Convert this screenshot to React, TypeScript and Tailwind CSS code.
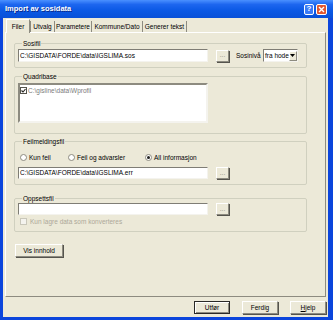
import React from "react";

const sunken =
  "bg-white border border-t-[#7f7d75] border-l-[#7f7d75] border-r-[#f4f3ee] border-b-[#f4f3ee]";
const raised =
  "bg-[#ECE9D8] border border-t-white border-l-white border-r-[#8d8b80] border-b-[#8d8b80] shadow-[1px_1px_0_#55544d]";

function DotsButton() {
  return (
    <div className={`ml-[8px] w-[13px] h-[12px] ${raised} flex items-center justify-center text-[#8d8b80] leading-none`}>
      ...
    </div>
  );
}

function Radio({ label, checked }: { label: string; checked?: boolean }) {
  return (
    <div className="flex items-center gap-[2px]">
      <div className="w-[7px] h-[7px] rounded-full bg-white border border-[#8d8b80] flex items-center justify-center">
        {checked && <div className="w-[3px] h-[3px] rounded-full bg-[#21211f]" />}
      </div>
      <span>{label}</span>
    </div>
  );
}

export default function App() {
  return (
    <div className="w-[333px] h-[320px] bg-[#0b45dc] flex flex-col font-['Liberation_Sans',Arial,sans-serif] text-[6.5px] text-black overflow-hidden">
      {/* Title bar */}
      <div className="h-[18px] flex items-center pl-[5px] pr-[6px] bg-[linear-gradient(to_bottom,#4a90ff_0%,#1d66ef_25%,#0a58e4_60%,#0850d8_100%)]">
        <span className="flex-1 text-white font-bold text-[7.5px] [text-shadow:1px_1px_0_#0a2a8a]">
          Import av sosidata
        </span>
        <div className="w-[10px] h-[11px] rounded-[2px] border border-white bg-[#3b7bf7] text-white text-[8px] font-bold flex items-center justify-center leading-none">
          ?
        </div>
        <div className="ml-[2px] w-[11px] h-[11px] rounded-[2px] border border-white bg-[#e1562f] flex items-center justify-center">
          <svg width="7" height="7" viewBox="0 0 7 7">
            <path d="M1 1 L6 6 M6 1 L1 6" stroke="white" strokeWidth="1.4" />
          </svg>
        </div>
      </div>

      {/* Dialog body */}
      <div className="flex-1 ml-[3px] mr-[5px] mb-[3px] bg-[#ECE9D8] flex flex-col">
        {/* Tabs */}
        <div className="h-[14px] flex items-end pl-[3px]">
          <div className="relative z-10 -mb-px w-[24px] h-[14px] bg-[#ECE9D8] border border-b-0 border-t-white border-l-white border-r-[#8d8b80] flex items-center justify-center">
            Filer
          </div>
          <div className="w-[25px] h-[11px] border-l border-r border-[#8d8b80] flex items-center justify-center">Utvalg</div>
          <div className="w-[37px] h-[11px] border-r border-[#8d8b80] flex items-center justify-center">Parametere</div>
          <div className="w-[51px] h-[11px] border-r border-[#8d8b80] flex items-center justify-center">Kommune/Dato</div>
          <div className="w-[44px] h-[11px] border-r border-[#8d8b80] flex items-center justify-center">Generer tekst</div>
        </div>

        {/* Tab panel */}
        <div className="ml-[2px] mr-[2px] h-[265px] border border-t-white border-l-white border-r-[#8d8b80] border-b-[#8d8b80] flex flex-col">
          {/* Sosifil */}
          <fieldset className="ml-[8px] mt-[6px] w-[293px] h-[29px] border border-[#d0d0bf] rounded-[2px] pl-[3px]">
            <legend className="ml-[4px] px-[1px] leading-[9px]">Sosifil</legend>
            <div className="pt-[1px] flex items-center">
              <div className={`w-[190px] h-[13px] ${sunken} flex items-center pl-[1px]`}>
                C:\GISDATA\FORDE\data\IGSLIMA.sos
              </div>
              <DotsButton />
              <span className="ml-[7px] w-[27px] whitespace-nowrap">Sosinivå</span>
              <div className={`w-[35px] h-[13px] ${sunken} flex items-center overflow-hidden`}>
                <span className="flex-1 pl-[1px] whitespace-nowrap">fra hode</span>
                <div className={`w-[8px] h-[10px] mr-px shrink-0 ${raised} shadow-none flex items-center justify-center`}>
                  <svg width="5" height="3" viewBox="0 0 5 3">
                    <path d="M0 0 H5 L2.5 3 Z" fill="#000" />
                  </svg>
                </div>
              </div>
            </div>
          </fieldset>

          {/* Quadribase */}
          <fieldset className="ml-[8px] mt-[4px] w-[293px] h-[62px] border border-[#d0d0bf] rounded-[2px] pl-[3px]">
            <legend className="ml-[4px] px-[1px] leading-[9px]">Quadribase</legend>
            <div className="mt-[2px] w-[190px] h-[40px] bg-white border-2 border-t-[#8d8b80] border-l-[#8d8b80] border-r-[#f4f3ee] border-b-[#f4f3ee] pt-[1px]">
              <div className="flex items-center">
                <div className="w-[7px] h-[7px] border border-[#55544d] bg-white flex items-center justify-center">
                  <svg width="5" height="5" viewBox="0 0 5 5">
                    <path d="M0.5 2.5 L2 4 L4.5 1" stroke="#21211f" strokeWidth="1.1" fill="none" />
                  </svg>
                </div>
                <span className="ml-[1px] text-[#7b7b7b]">C:\gisline\data\Wprofil</span>
              </div>
            </div>
          </fieldset>

          {/* Feilmeldingsfil */}
          <fieldset className="ml-[8px] mt-[3px] w-[293px] h-[48px] border border-[#d0d0bf] rounded-[2px] pl-[3px]">
            <legend className="ml-[4px] px-[1px] leading-[9px]">Feilmeldingsfil</legend>
            <div className="pt-[7px] pl-[2px] h-[16px] flex items-center">
              <div className="w-[48px]">
                <Radio label="Kun feil" />
              </div>
              <div className="w-[77px]">
                <Radio label="Feil og advarsler" />
              </div>
              <Radio label="All informasjon" checked />
            </div>
            <div className="mt-[5px] flex items-center">
              <div className={`w-[190px] h-[12px] ${sunken} flex items-center pl-[1px]`}>
                C:\GISDATA\FORDE\data\IGSLIMA.err
              </div>
              <DotsButton />
            </div>
          </fieldset>

          {/* Oppsettsfil */}
          <fieldset className="ml-[8px] mt-[9px] w-[293px] h-[38px] border border-[#d0d0bf] rounded-[2px] pl-[3px]">
            <legend className="ml-[4px] px-[1px] leading-[9px]">Oppsettsfil</legend>
            <div className="flex items-center">
              <div className={`w-[190px] h-[12px] ${sunken}`} />
              <DotsButton />
            </div>
            <div className="mt-[2px] h-[9px] pl-[2px] flex items-center gap-[3px] text-[#aca899]">
              <div className="w-[7px] h-[7px] border border-[#c9c7ba] bg-[#f4f3ee]" />
              <span>Kun lagre data som konverteres</span>
            </div>
          </fieldset>

          {/* Vis innhold */}
          <div className={`ml-[9px] mt-[12px] w-[48px] h-[13px] ${raised} flex items-center justify-center`}>
            Vis innhold
          </div>
        </div>

        {/* Footer buttons */}
        <div className="pt-[4px] pr-[2px] flex justify-end gap-[12px]">
          <div className="w-[36px] h-[13px] bg-[#ECE9D8] border border-[#2b2a27] flex items-center justify-center shadow-[inset_1px_1px_0_white,inset_-1px_-1px_0_#8d8b80]">
            Utfør
          </div>
          <div className={`w-[36px] h-[13px] ${raised} flex items-center justify-center`}>Ferdig</div>
          <div className={`w-[36px] h-[13px] ${raised} flex items-center justify-center`}>
            <span>
              <span className="underline">H</span>jelp
            </span>
          </div>
        </div>
      </div>
    </div>
  );
}
